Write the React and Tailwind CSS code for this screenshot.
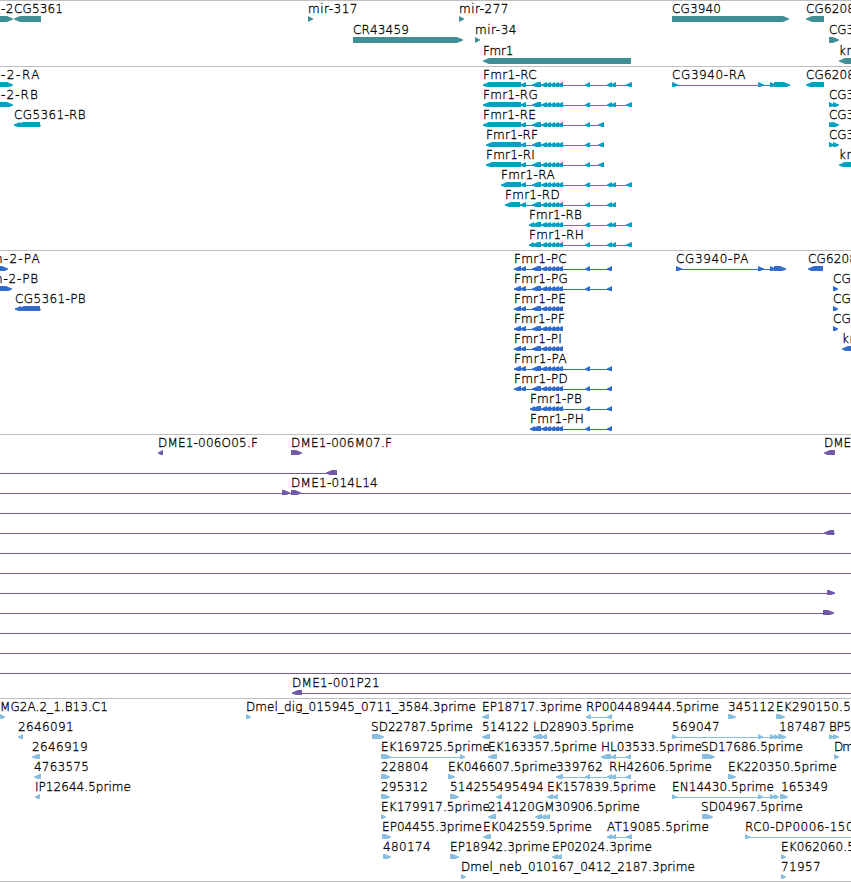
import React from 'react';

const WIDTH = 851;

// label: [text, start, end]
// glyph: [start, end, strand], strand is 'l' or 'r'
// line: [start, end]
const CLUSTER = [[532, 541, 'l'], [541, 547, 'l'], [545, 551, 'l'], [550, 555, 'l'], [553, 559, 'l'], [557, 563, 'l']];
const UTR_LONG = [[585, 590, 'l'], [607, 612, 'l'], [611, 616, 'l'], [626, 632, 'l']];
const UTR_SHORT = [[585, 590, 'l'], [598, 604, 'l']];
const CDS_TAIL = [[585, 590, 'l'], [607, 612, 'l']];
const CDS_HEAD = [[514, 521, 'l'], [520, 526, 'l']];

const tracks = [
  {
    id: 'gene',
    color: '#3f8f94',
    rowClass: 'h-[21px]',
    padClass: 'pb-[2px]',
    rows: [
      {
        labels: [['-2', 1, 14], ['CG5361', 14, 63], ['mir-317', 308, 358], ['mir-277', 459, 509], ['CG3940', 672, 721], ['CG6208', 806, 855]],
        glyphs: [[-10, 13, 'r'], [14, 41, 'l'], [308, 313, 'r'], [459, 464, 'r'], [672, 789, 'r'], [806, 824, 'l']],
      },
      {
        labels: [['CR43459', 353, 409], ['mir-34', 475, 517], ['CG3', 829, 854]],
        glyphs: [[353, 463, 'r'], [475, 480, 'r'], [829, 839, 'r']],
      },
      {
        labels: [['Fmr1', 483, 513], ['kr', 839, 852]],
        glyphs: [[483, 631, 'l'], [839, 870, 'l']],
      },
    ],
  },
  {
    id: 'transcript',
    color: '#00a0c0',
    rowClass: 'h-5',
    padClass: 'pb-[3px]',
    rows: [
      {
        labels: [['-2-RA', 1, 41], ['Fmr1-RC', 483, 537], ['CG3940-RA', 672, 746], ['CG6208', 806, 855]],
        lines: [[483, 632], [672, 790]],
        glyphs: [[-10, 13, 'r'], [483, 521, 'l'], [520, 526, 'l'], ...CLUSTER, ...UTR_LONG, [672, 678, 'r'], [758, 764, 'r'], [770, 776, 'r'], [774, 790, 'r'], [806, 824, 'l']],
      },
      {
        labels: [['-2-RB', 1, 39], ['Fmr1-RG', 483, 538], ['CG3', 829, 854]],
        lines: [[483, 632]],
        glyphs: [[-10, 13, 'r'], [483, 521, 'l'], [520, 526, 'l'], ...CLUSTER, ...UTR_LONG, [829, 834, 'r'], [833, 839, 'r']],
      },
      {
        labels: [['CG5361-RB', 14, 86], ['Fmr1-RE', 483, 536], ['CG3', 829, 854]],
        lines: [[14, 41], [483, 604]],
        glyphs: [[14, 20, 'l'], [17, 40, 'l'], [483, 521, 'l'], [520, 526, 'l'], ...CLUSTER, ...UTR_SHORT, [829, 834, 'r'], [831, 839, 'r']],
      },
      {
        labels: [['Fmr1-RF', 486, 538], ['CG3', 829, 854]],
        lines: [[486, 604]],
        glyphs: [[486, 521, 'l'], [520, 526, 'l'], ...CLUSTER, ...UTR_SHORT, [829, 834, 'r'], [833, 839, 'r']],
      },
      {
        labels: [['Fmr1-RI', 486, 535], ['kr', 839, 852]],
        lines: [[486, 604]],
        glyphs: [[486, 521, 'l'], [520, 526, 'l'], ...CLUSTER, ...UTR_SHORT, [839, 870, 'l']],
      },
      {
        labels: [['Fmr1-RA', 501, 555]],
        lines: [[501, 632]],
        glyphs: [[501, 521, 'l'], [520, 526, 'l'], ...CLUSTER, ...UTR_LONG],
      },
      {
        labels: [['Fmr1-RD', 505, 560]],
        lines: [[505, 616]],
        glyphs: [[505, 520, 'l'], [520, 526, 'l'], ...CLUSTER, [585, 590, 'l'], [607, 612, 'l'], [611, 616, 'l']],
      },
      {
        labels: [['Fmr1-RB', 529, 582]],
        lines: [[529, 632]],
        glyphs: [[529, 534, 'l'], ...CLUSTER, ...UTR_LONG],
      },
      {
        labels: [['Fmr1-RH', 529, 584]],
        lines: [[529, 632]],
        glyphs: [[529, 534, 'l'], ...CLUSTER, ...UTR_LONG],
      },
    ],
  },
  {
    id: 'protein',
    color: '#316ccd',
    rowClass: 'h-5',
    padClass: 'pb-[3px]',
    rows: [
      {
        labels: [['n-2-PA', -5, 41], ['Fmr1-PC', 514, 567], ['CG3940-PA', 676, 749], ['CG6208', 808, 857]],
        lines: [[514, 612], [676, 786]],
        glyphs: [[-10, 8, 'r'], ...CDS_HEAD, ...CLUSTER, ...CDS_TAIL, [676, 682, 'r'], [758, 764, 'r'], [770, 776, 'r'], [774, 786, 'r'], [808, 823, 'l']],
      },
      {
        labels: [['n-2-PB', -5, 39], ['Fmr1-PG', 514, 568], ['CG', 833, 851]],
        lines: [[514, 612]],
        glyphs: [[-10, 12, 'r'], ...CDS_HEAD, ...CLUSTER, ...CDS_TAIL, [833, 838, 'r']],
      },
      {
        labels: [['CG5361-PB', 15, 86], ['Fmr1-PE', 514, 566], ['CG', 833, 851]],
        lines: [[15, 41], [514, 563]],
        glyphs: [[15, 21, 'l'], [18, 40, 'l'], ...CDS_HEAD, ...CLUSTER, [833, 838, 'r']],
      },
      {
        labels: [['Fmr1-PF', 514, 565], ['CG', 833, 851]],
        lines: [[514, 563]],
        glyphs: [...CDS_HEAD, ...CLUSTER, [833, 838, 'r']],
      },
      {
        labels: [['Fmr1-PI', 514, 562], ['kr', 842, 855]],
        lines: [[514, 563]],
        glyphs: [...CDS_HEAD, ...CLUSTER, [842, 870, 'l']],
      },
      { labels: [['Fmr1-PA', 514, 567]], lines: [[514, 612]], glyphs: [...CDS_HEAD, ...CLUSTER, ...CDS_TAIL] },
      { labels: [['Fmr1-PD', 514, 568]], lines: [[514, 612]], glyphs: [...CDS_HEAD, ...CLUSTER, ...CDS_TAIL] },
      { labels: [['Fmr1-PB', 530, 582]], lines: [[530, 612]], glyphs: [[530, 535, 'l'], ...CLUSTER, ...CDS_TAIL] },
      { labels: [['Fmr1-PH', 530, 584]], lines: [[530, 612]], glyphs: [[530, 535, 'l'], ...CLUSTER, ...CDS_TAIL] },
    ],
  },
  {
    id: 'bac',
    color: '#7259a7',
    rowClass: 'h-5',
    padClass: 'pb-[3px]',
    rows: [
      {
        labels: [['DME1-006O05.F', 158, 258], ['DME1-006M07.F', 291, 392], ['DME', 824, 851]],
        glyphs: [[158, 163, 'l'], [291, 302, 'r'], [824, 835, 'l']],
      },
      { lines: [[0, 337]], glyphs: [[326, 337, 'l']] },
      { labels: [['DME1-014L14', 291, 378]], lines: [[0, 851]], glyphs: [[282, 290, 'r'], [291, 301, 'r']] },
      { lines: [[0, 851]] },
      { lines: [[0, 835]], glyphs: [[824, 834, 'l']] },
      { lines: [[0, 851]] },
      { lines: [[0, 851]] },
      { lines: [[0, 835]], glyphs: [[827, 835, 'r']] },
      { lines: [[0, 834]], glyphs: [[823, 834, 'r']] },
      { lines: [[0, 851]] },
      { lines: [[0, 851]] },
      { lines: [[0, 851]] },
      { labels: [['DME1-001P21', 292, 380]], lines: [[292, 851]], glyphs: [[292, 302, 'l']] },
    ],
  },
  {
    id: 'est',
    color: '#8abede',
    rowClass: 'h-5',
    padClass: 'pb-[2px]',
    rows: [
      {
        labels: [['MG2A.2_1.B13.C1', 0, 108], ['Dmel_dig_015945_0711_3584.3prime', 246, 476], ['EP18717.3prime', 482, 582], ['RP004489444.5prime', 586, 719], ['345112', 728, 775], ['EK290150.5', 776, 851]],
        lines: [[586, 612]],
        glyphs: [[0, 5, 'r'], [246, 251, 'r'], [482, 489, 'l'], [586, 591, 'l'], [607, 612, 'l'], [728, 736, 'r'], [776, 785, 'r']],
      },
      {
        labels: [['2646091', 18, 74], ['SD22787.5prime', 371, 473], ['514122', 482, 529], ['LD28903.5prime', 533, 634], ['569047', 672, 720], ['187487', 779, 826], ['BP5', 829, 851]],
        lines: [[672, 786]],
        glyphs: [[18, 23, 'l'], [372, 384, 'r'], [482, 490, 'l'], [533, 542, 'l'], [541, 547, 'l'], [672, 677, 'r'], [758, 763, 'r'], [770, 775, 'r'], [774, 779, 'r'], [778, 786, 'r'], [829, 834, 'r'], [833, 839, 'r']],
      },
      {
        labels: [['2646919', 32, 88], ['EK169725.5prime', 381, 490], ['EK163357.5prime', 488, 597], ['HL03533.5prime', 601, 702], ['SD17686.5prime', 701, 803], ['Dm', 834, 853]],
        lines: [[381, 465], [601, 631]],
        glyphs: [[32, 40, 'l'], [381, 391, 'r'], [460, 465, 'r'], [488, 497, 'l'], [601, 611, 'l'], [611, 616, 'l'], [626, 631, 'l'], [702, 715, 'r'], [834, 839, 'r']],
      },
      {
        labels: [['4763575', 34, 89], ['228804', 381, 429], ['EK046607.5prime', 448, 557], ['339762', 556, 603], ['RH42606.5prime', 609, 712], ['EK220350.5prime', 728, 837]],
        lines: [[556, 631]],
        glyphs: [[34, 41, 'l'], [381, 390, 'r'], [448, 455, 'r'], [556, 563, 'l'], [585, 590, 'l'], [607, 612, 'l'], [610, 616, 'l'], [626, 631, 'l'], [728, 736, 'r']],
      },
      {
        labels: [['IP12644.5prime', 35, 131], ['295312', 381, 428], ['514255', 450, 497], ['495494', 496, 544], ['EK157839.5prime', 547, 656], ['EN14430.5prime', 672, 774], ['165349', 781, 828]],
        lines: [[672, 778]],
        glyphs: [[35, 40, 'l'], [381, 390, 'r'], [450, 459, 'r'], [496, 502, 'l'], [547, 553, 'l'], [552, 558, 'l'], [672, 677, 'r'], [758, 763, 'r'], [770, 775, 'r'], [774, 779, 'r'], [780, 788, 'r']],
      },
      {
        labels: [['EK179917.5prime', 381, 490], ['214120', 488, 535], ['GM30906.5prime', 535, 640], ['SD04967.5prime', 701, 803]],
        glyphs: [[381, 386, 'r'], [488, 496, 'l'], [535, 542, 'l'], [541, 546, 'l'], [544, 550, 'l'], [702, 713, 'r']],
      },
      {
        labels: [['EP04455.3prime', 382, 482], ['EK042559.5prime', 483, 592], ['AT19085.5prime', 607, 709], ['RC0-DP0006-150', 745, 854]],
        lines: [[607, 632], [745, 851]],
        glyphs: [[382, 391, 'r'], [483, 491, 'l'], [607, 612, 'l'], [611, 616, 'l'], [626, 632, 'l'], [745, 750, 'r']],
      },
      {
        labels: [['480174', 383, 431], ['EP18942.3prime', 450, 550], ['EP02024.3prime', 552, 652], ['EK062060.5', 781, 855]],
        glyphs: [[383, 391, 'r'], [450, 459, 'r'], [552, 558, 'l'], [556, 562, 'l'], [781, 786, 'r']],
      },
      {
        labels: [['Dmel_neb_010167_0412_2187.3prime', 461, 695], ['71957', 781, 821]],
        glyphs: [[461, 466, 'r'], [781, 786, 'r']],
      },
    ],
  },
];

const ctx = document.createElement('canvas').getContext('2d');

// spread the characters so that a label fills its span
const spacingFor = (text, width) => {
  ctx.font = '200 12px "DejaVu Sans"';
  return (width - ctx.measureText(text).width) / text.length;
};

const arrowPoints = ([start, end, strand]) => {
  const tip = Math.min(6, end - start);
  if (strand === 'r') {
    return `${start},0 ${end - tip},0 ${end},2.6 ${end},3.4 ${end - tip},6 ${start},6`;
  }
  return `${end},0 ${start + tip},0 ${start},2.6 ${start},3.4 ${start + tip},6 ${end},6`;
};

const Label = ({ text, start, end }) => (
  <span
    className="absolute top-[1px] whitespace-pre leading-[14px]"
    style={{ left: start, letterSpacing: `${spacingFor(text, end - start)}px` }}
  >
    {text}
  </span>
);

const Row = ({ row, color, className }) => {
  const { labels = [], lines = [], glyphs = [] } = row;
  return (
    <div className={`relative flex flex-col overflow-hidden pt-[15px] ${className}`}>
      <svg width={WIDTH} height="6" viewBox={`0 0 ${WIDTH} 6`} fill={color} className="block shrink-0">
        {lines.map(([start, end], i) => (
          <rect key={i} x={start} y="3" width={end - start} height="1" />
        ))}
        {glyphs.map((g, i) => (
          <polygon key={i} points={arrowPoints(g)} />
        ))}
      </svg>
      {labels.map(([text, start, end], i) => (
        <Label key={i} text={text} start={start} end={end} />
      ))}
    </div>
  );
};

const App = () => {
  return (
    <div className="flex h-[882px] w-[851px] flex-col overflow-hidden border-b border-[#bebebe] bg-white font-['DejaVu_Sans',sans-serif] text-[12px] font-extralight text-black [-webkit-text-stroke:0.3px_black]">
      {tracks.map(track => (
        <section key={track.id} className={`flex flex-col border-t border-[#bebebe] ${track.padClass}`}>
          {track.rows.map((row, i) => (
            <Row key={i} row={row} color={track.color} className={track.rowClass} />
          ))}
        </section>
      ))}
    </div>
  );
};

export default App;
